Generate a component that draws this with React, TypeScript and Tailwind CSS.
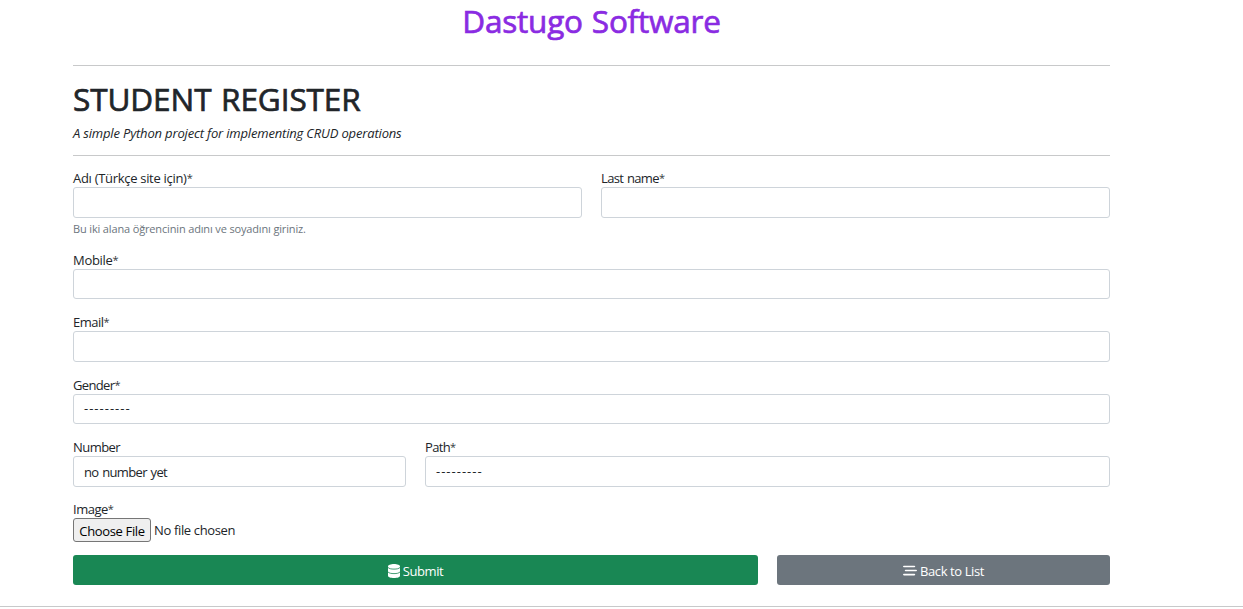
import type { ReactNode } from "react";
import { FaBarsStaggered } from "react-icons/fa6";

const control =
  "flex w-full items-center rounded-[3px] border border-[#ced4da] bg-white px-[10px] text-[13px] text-[#212529] outline-none";

type LabelProps = { children: ReactNode; required?: boolean; tracking?: string };

function Label({ children, required = true, tracking = "tracking-[-0.3px]" }: LabelProps) {
  return (
    <label className={`block h-[19px] whitespace-nowrap pt-px leading-[19px] ${tracking}`}>
      {children}
      {required && <span className="align-[1px] text-[11px] leading-none text-[#343a40]">*</span>}
    </label>
  );
}

function DatabaseIcon() {
  return (
    <svg className="mb-[2px] h-[14px] w-[12px]" viewBox="0 0 12 14" fill="none">
      <path d="M0 2.3C0 1 2.7 0 6 0s6 1 6 2.3v9.4C12 13 9.3 14 6 14s-6-1-6-2.3z" fill="white" />
      <path d="M0 3.4c1 1.3 3.2 1.7 6 1.7s5-.4 6-1.7M0 7.9c1 1.3 3.2 1.7 6 1.7s5-.4 6-1.7" stroke="#198754" strokeWidth="0.8" />
    </svg>
  );
}

export default function App() {
  return (
    <div className="h-[609px] overflow-hidden bg-white font-['Open_Sans','Noto_Sans',sans-serif] text-[13px] text-[#212529]">
      <main className="ml-[73px] w-[1037px]">
        <h1 className="h-[65px] text-center text-[31.5px] leading-[42px] font-medium tracking-[-0.2px] [word-spacing:1px] text-[#8a2be2] [-webkit-text-stroke:0.7px_#8a2be2]">
          <span>Dastugo Software</span>
        </h1>
        <hr className="border-[#c8c9ca]" />
        <h2 className="mt-[14px] h-[39px] text-[31.5px] leading-[37px] font-medium tracking-[-0.08px] [word-spacing:1.5px] whitespace-nowrap [-webkit-text-stroke:0.7px_#212529]">
          <span>STUDENT REGISTER</span>
        </h2>
        <p className="mt-[5px] h-[19px] leading-[19px] tracking-[-0.17px] whitespace-nowrap italic">
          <span>A simple Python project for implementing CRUD operations</span>
        </p>
        <hr className="mt-[12px] border-[#c8c9ca]" />

        <form className="pt-[12px]" onSubmit={(e) => e.preventDefault()}>
          <div className="grid grid-cols-2 gap-[19px]">
            <div>
              <Label>Adı (Türkçe site için)</Label>
              <input className={`${control} h-[31px]`} />
              <small className="mt-[2px] mb-px block h-[17px] text-[11px] leading-[17px] tracking-[-0.15px] text-[#6c757d]">
                <span>Bu iki alana öğrencinin adını ve soyadını giriniz.</span>
              </small>
            </div>
            <div>
              <Label tracking="tracking-[-0.65px] [word-spacing:1px]">Last name</Label>
              <input className={`${control} h-[31px]`} />
            </div>
          </div>
          <div className="mt-[12px]">
            <Label>Mobile</Label>
            <input className={`${control} h-[30px]`} />
          </div>
          <div className="mt-[13px]">
            <Label tracking="tracking-[-0.5px]">Email</Label>
            <input className={`${control} h-[31px]`} />
          </div>
          <div className="mt-[13px]">
            <Label tracking="tracking-[-0.65px]">Gender</Label>
            <div className={`${control} h-[30px] tracking-[1px]`}>
              <span>---------</span>
            </div>
          </div>
          <div className="mt-[13px] grid grid-cols-[333px_1fr] gap-[19px]">
            <div>
              <Label required={false} tracking="tracking-[-0.55px]">Number</Label>
              <div className={`${control} h-[31px] pt-[2px] tracking-[-0.65px] [word-spacing:1px]`}>
                <span>no number yet</span>
              </div>
            </div>
            <div>
              <Label tracking="tracking-[-0.65px]">Path</Label>
              <div className={`${control} h-[31px] tracking-[1px]`}>
                <span>---------</span>
              </div>
            </div>
          </div>
          <div className="mt-[12px]">
            <Label tracking="tracking-[-0.5px]">Image</Label>
            <div className="flex h-[24px] items-center">
              <button
                type="button"
                className="flex h-[24px] w-[78px] items-center justify-center rounded-[3px] border border-[#767676] bg-[#efefef] pt-[3px] tracking-[-0.35px] whitespace-nowrap text-black"
              >
                <span>Choose File</span>
              </button>
              <span className="ml-[3px] pt-[2px] tracking-[-0.35px]">No file chosen</span>
            </div>
          </div>
          <div className="mt-[13px] grid grid-cols-[685px_333px] gap-[19px]">
            <button type="submit" className="flex h-[30px] items-center justify-center gap-[3px] rounded-[3px] bg-[#198754] pt-[3px] tracking-[-0.4px] text-white">
              <DatabaseIcon />
              <span>Submit</span>
            </button>
            <button type="button" className="flex h-[30px] items-center justify-center gap-[3px] rounded-[3px] bg-[#6c757d] pt-[3px] tracking-[-0.4px] text-white">
              <FaBarsStaggered className="mb-[3px] h-[13px] w-[14px]" preserveAspectRatio="none" />
              <span>Back to List</span>
            </button>
          </div>
        </form>
      </main>
      <hr className="mt-[21px] border-[#c8c9ca]" />
    </div>
  );
}
